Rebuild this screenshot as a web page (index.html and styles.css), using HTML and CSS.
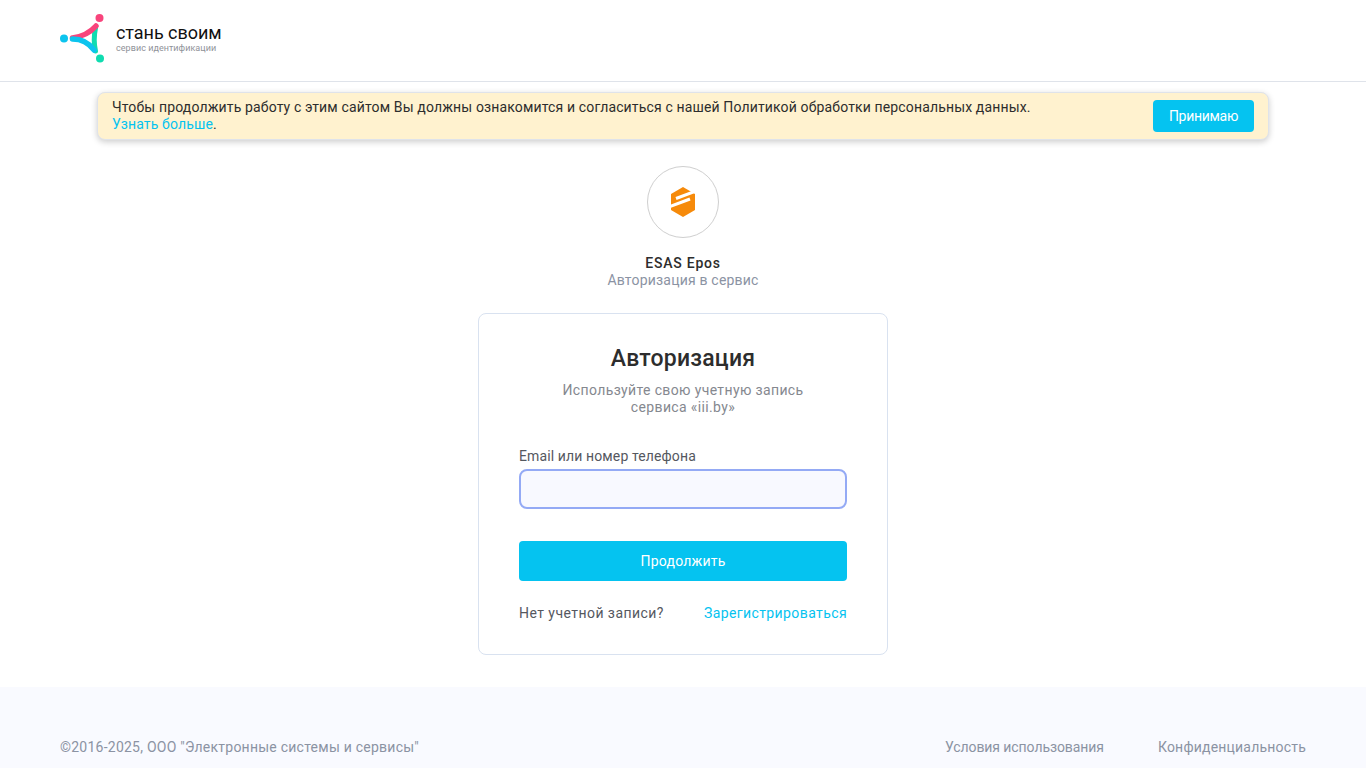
FILE: index.html
```html
<!DOCTYPE html>
<html lang="ru">
<head>
  <meta charset="UTF-8">
  <meta name="viewport" content="width=device-width, initial-scale=1.0">
  <title>Авторизация</title>
  <link rel="stylesheet" href="styles.css">
</head>
<body>
  <header class="site-header">
    <a class="logo" href="#">
      <svg class="logo-mark" width="44" height="50" viewBox="0 0 44 50" aria-hidden="true">
        <circle cx="4" cy="24.500" r="4" fill="#0cc4ee"/>
        <circle cx="39.500" cy="4" r="4" fill="#f8447c"/>
        <circle cx="40" cy="44.500" r="4" fill="#0fdcb0"/>
        <path d="M35.500 14 Q33 26 35.500 37" fill="none" stroke="#0fdcb0" stroke-width="5" stroke-linecap="round"/>
        <path d="M12.500 24 Q27 22 36 12" fill="none" stroke="#f8447c" stroke-width="5.500" stroke-linecap="round"/>
        <path d="M12.500 25 Q26 25 34 36" fill="none" stroke="#0cc4ee" stroke-width="5.500" stroke-linecap="round"/>
      </svg>
      <span class="logo-text">
        <span class="logo-title">стань своим</span>
        <span class="logo-sub">сервис идентификации</span>
      </span>
    </a>
  </header>

  <div class="cookie-bar">
    <p class="cookie-text">Чтобы продолжить работу с этим сайтом Вы должны ознакомится и согласиться с нашей Политикой обработки персональных данных.<br><a href="#">Узнать больше</a>.</p>
    <button class="cookie-btn" type="button">Принимаю</button>
  </div>

  <main class="content">
    <div class="service-icon">
      <svg width="24" height="30" viewBox="0 0 24 30" aria-hidden="true">
        <path d="M12 0 L24 7 L24 23 L12 30 L0 23 L0 7 Z" fill="#f68a0a"/>
        <path d="M5 11.500 L25 4" stroke="#fff" stroke-width="3" fill="none"/>
        <path d="M-1 19.500 L19 12" stroke="#fff" stroke-width="3" fill="none"/>
      </svg>
    </div>
    <div class="service-name">ESAS Epos</div>
    <div class="service-note">Авторизация в сервис</div>

    <form class="login-card">
      <h1>Авторизация</h1>
      <p class="login-note">Используйте свою учетную запись<br>сервиса «iii.by»</p>
      <label class="field-label" for="login">Email или номер телефона</label>
      <input class="field-input" id="login" type="text">
      <button class="submit-btn" type="submit">Продолжить</button>
      <div class="register-row">
        <span>Нет учетной записи?</span>
        <a class="register-link" href="#">Зарегистрироваться</a>
      </div>
    </form>
  </main>

  <footer class="site-footer">
    <span>©2016-2025, ООО "Электронные системы и сервисы"</span>
    <nav class="footer-links">
      <a class="terms-link" href="#">Условия использования</a>
      <a href="#">Конфиденциальность</a>
    </nav>
  </footer>
</body>
</html>
```

FILE: styles.css
```css
body {
  margin: 0;
  font-family: Roboto, "Liberation Sans", sans-serif;
  font-size: 14px;
  line-height: 17px;
  letter-spacing: 0.2px;
  color: #2d2d2d;
  background-color: #fff;
}

a {
  color: #05c3f0;
  text-decoration: none;
}

.site-header {
  height: 82px;
  box-sizing: border-box;
  padding: 0 60px 4px;
  border-bottom: 1px solid #dfe3ea;
  display: flex;
  align-items: center;
}

.logo {
  display: flex;
  align-items: center;
  gap: 12px;
  color: #111;
}

.logo-mark {
  display: block;
}

.logo-text {
  display: flex;
  flex-direction: column;
  margin-top: -2px;
}

.logo-title {
  font-size: 18px;
  line-height: 20px;
  letter-spacing: -0.05px;
}

.logo-sub {
  font-size: 9px;
  line-height: 10px;
  letter-spacing: 0.05px;
  color: #8f9299;
}

.cookie-bar {
  width: 1172px;
  height: 48px;
  box-sizing: border-box;
  margin: 10px auto 0;
  padding: 0 14px;
  display: flex;
  align-items: center;
  justify-content: space-between;
  background-color: #fff2cf;
  border: 1px solid #dfe3ea;
  border-radius: 8px;
  box-shadow: 0 2px 6px rgba(0, 0, 0, 0.2);
}

.cookie-text {
  margin: 0;
  letter-spacing: 0.145px;
}

.cookie-btn {
  width: 101px;
  height: 32px;
  padding: 0;
  font: inherit;
  letter-spacing: -0.3px;
  color: #fff;
  background-color: #05c3f0;
  border: none;
  border-radius: 4px;
}

.content {
  display: flex;
  flex-direction: column;
  align-items: center;
  padding-top: 26px;
}

.service-icon {
  width: 72px;
  height: 72px;
  box-sizing: border-box;
  display: flex;
  align-items: center;
  justify-content: center;
  border: 1px solid #cfcfcf;
  border-radius: 50%;
}

.service-name {
  margin-top: 17px;
  font-weight: 500;
  letter-spacing: 0.75px;
}

.service-note {
  color: #8b93a3;
}

.login-card {
  width: 410px;
  height: 342px;
  box-sizing: border-box;
  margin-top: 24px;
  padding: 31px 40px 0;
  display: flex;
  flex-direction: column;
  border: 1px solid #d9e2f0;
  border-radius: 8px;
}

.login-card h1 {
  margin: 0;
  font-size: 23px;
  line-height: 28px;
  font-weight: 500;
  text-align: center;
}

.login-note {
  margin: 9px 0 0;
  color: #85888f;
  text-align: center;
  letter-spacing: 0.36px;
}

.field-label {
  margin-top: 32px;
  color: #55585f;
  letter-spacing: 0.12px;
}

.field-input {
  height: 40px;
  box-sizing: border-box;
  margin-top: 4px;
  background-color: #f8f9ff;
  border: 2px solid #94aaf5;
  border-radius: 8px;
  outline: none;
}

.submit-btn {
  height: 40px;
  margin-top: 32px;
  padding: 0;
  font: inherit;
  letter-spacing: inherit;
  color: #fff;
  background-color: #05c3f0;
  border: none;
  border-radius: 4px;
}

.register-row {
  margin-top: 24px;
  display: flex;
  justify-content: space-between;
  color: #55585f;
  letter-spacing: 0.45px;
}

.register-link {
  letter-spacing: 0.4px;
}

.site-footer {
  height: 81px;
  box-sizing: border-box;
  margin-top: 32px;
  padding: 52px 60px 0;
  display: flex;
  justify-content: space-between;
  color: #8b93a3;
  background-color: #f9faff;
  letter-spacing: 0.24px;
}

.footer-links {
  display: flex;
  gap: 54px;
  letter-spacing: 0.2px;
}

.footer-links a {
  color: #8b93a3;
}

.footer-links .terms-link {
  letter-spacing: -0.08px;
}
```
